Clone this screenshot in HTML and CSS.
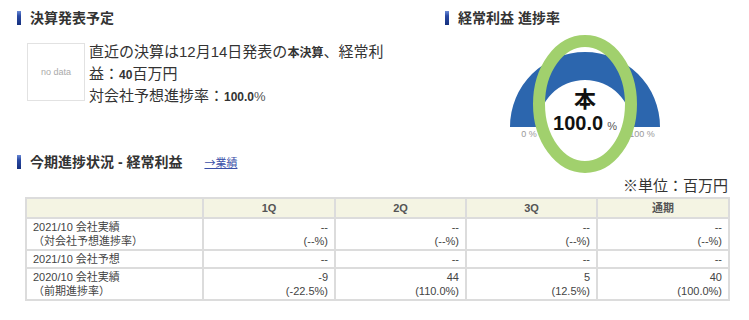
FILE: index.html
```html
<!DOCTYPE html>
<html lang="ja">
<head>
    <meta charset="UTF-8">
    <title>決算発表予定</title>
    <link rel="stylesheet" href="styles.css">
</head>
<body>
    <div class="top">
        <div class="schedule">
            <h2 class="title">決算発表予定</h2>
            <div class="schedule-body">
                <div class="nodata">no data</div>
                <p class="schedule-text">
                    直近の決算は12月14日発表の<b>本決算</b>、経常利益：<b>40</b>百万円<br>
                    対会社予想進捗率：<b>100.0</b><span class="pct">%</span>
                </p>
            </div>
        </div>

        <div class="gauge-box">
            <h2 class="title">経常利益 進捗率</h2>
            <svg class="gauge" width="200" height="147" viewBox="0 0 200 147">
                <path d="M25 99 A75 75 0 0 1 175 99 L147 99 A47 47 0 0 0 53 99 Z" fill="#2c66ae"/>
                <text x="44" y="109" class="gauge-label" text-anchor="middle">0 %</text>
                <text x="157" y="109" class="gauge-label" text-anchor="middle">100 %</text>
                <ellipse cx="100" cy="76" rx="46" ry="63" fill="none" stroke="#a1d06d" stroke-width="12"/>
                <text x="100" y="79" class="gauge-kind" text-anchor="middle">本</text>
                <text x="100" y="102" class="gauge-value" text-anchor="middle">100.0<tspan class="gauge-unit" dx="4">%</tspan></text>
            </svg>
        </div>
    </div>

    <div class="progress">
        <h2 class="title">今期進捗状況 - 経常利益<a href="#" class="more">→業績</a></h2>
        <p class="unit">※単位：百万円</p>
        <table class="progress-table">
            <colgroup>
                <col style="width: 177px">
                <col style="width: 132px">
                <col style="width: 131px">
                <col style="width: 131px">
                <col style="width: 132px">
            </colgroup>
            <thead>
                <tr>
                    <th></th>
                    <th>1Q</th>
                    <th>2Q</th>
                    <th>3Q</th>
                    <th>通期</th>
                </tr>
            </thead>
            <tbody>
                <tr>
                    <td class="label">2021/10 会社実績<br>（対会社予想進捗率）</td>
                    <td>--<br>(--%)</td>
                    <td>--<br>(--%)</td>
                    <td>--<br>(--%)</td>
                    <td>--<br>(--%)</td>
                </tr>
                <tr>
                    <td class="label">2021/10 会社予想</td>
                    <td>--</td>
                    <td>--</td>
                    <td>--</td>
                    <td>--</td>
                </tr>
                <tr>
                    <td class="label">2020/10 会社実績<br>（前期進捗率）</td>
                    <td>-9<br>(-22.5%)</td>
                    <td>44<br>(110.0%)</td>
                    <td>5<br>(12.5%)</td>
                    <td>40<br>(100.0%)</td>
                </tr>
            </tbody>
        </table>
    </div>
</body>
</html>
```

FILE: styles.css
```css
* {
    margin: 0;
    padding: 0;
    box-sizing: border-box;
}

body {
    font-family: "Liberation Sans", "Noto Sans CJK JP", sans-serif;
    color: #333;
    background: #fff;
    padding: 8px 21px 0 17px;
}

.title {
    display: flex;
    align-items: center;
    font-size: 14px;
    line-height: 20px;
    font-weight: bold;
    color: #333;
}

.title::before {
    content: "";
    width: 4px;
    height: 14px;
    margin-right: 9px;
    background: linear-gradient(#6a8ad6, #2a4aa4 35%, #15307e);
}

/* 上段 */
.top {
    display: flex;
    height: 144px;
}

.schedule {
    width: 428px;
}

.schedule-body {
    display: flex;
    margin: 15px 0 0 10px;
}

.nodata {
    width: 58px;
    height: 58px;
    border: 1px solid #e2e2e2;
    display: flex;
    align-items: center;
    justify-content: center;
    font-size: 9px;
    color: #aaa;
    flex-shrink: 0;
}

.schedule-text {
    width: 312px;
    margin: -2px 0 0 4px;
    font-size: 15px;
    line-height: 22px;
    color: #333;
}

.schedule-text b {
    font-size: 12px;
    line-height: 0;
}

.schedule-text .pct {
    font-size: 13px;
    line-height: 0;
    color: #555;
}

.gauge-box {
    flex: 1;
}

.gauge {
    display: block;
    margin-left: 40px;
    overflow: visible;
}

.gauge-label {
    font-size: 9px;
    fill: #999;
}

.gauge-kind {
    font-size: 22px;
    font-weight: bold;
    fill: #111;
}

.gauge-value {
    font-size: 20px;
    font-weight: bold;
    fill: #111;
}

.gauge-unit {
    font-size: 11px;
    font-weight: normal;
    fill: #555;
}

/* 今期進捗 */
.more {
    margin-left: 22px;
    font-family: "Noto Sans CJK JP", sans-serif;
    font-size: 11px;
    font-weight: normal;
    color: #3a4fa8;
}

.unit {
    text-align: right;
    font-size: 15px;
    line-height: 18px;
    margin-top: 5px;
    color: #333;
}

.progress-table {
    margin: 2px 0 0 8px;
    width: 703px;
    border-collapse: collapse;
    table-layout: fixed;
    font-size: 11px;
    color: #444;
}

.progress-table th,
.progress-table td {
    border: 2px solid #dcdcdc;
    line-height: 14px;
}

.progress-table th {
    background: #f4f4e3;
    height: 20px;
    font-weight: bold;
    color: #555;
    text-align: center;
}

.progress-table td {
    padding: 1px 6px;
    text-align: right;
    vertical-align: top;
}

.progress-table td.label {
    text-align: left;
    padding-left: 6px;
}
```
